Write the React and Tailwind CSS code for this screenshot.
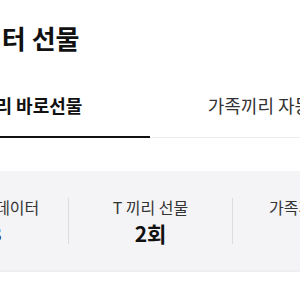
import React from 'react';

const stats = [
  { label: '선물가능 데이터', value: '0.3' },
  { label: 'T 끼리 선물', value: '2회' },
  { label: '가족끼리 선물', value: '1회' },
];

const App = () => {
  return (
    <div className="w-[300px] h-[300px] overflow-hidden bg-white font-['Noto_Sans_CJK_KR','Noto_Sans',sans-serif] text-[#111]">
      <div className="ml-[-46px] pt-[21px]">
        <h1 className="text-[26px] leading-[34px] font-bold whitespace-nowrap">데이터 선물</h1>
      </div>

      <div className="flex ml-[-100px] mt-[38px] w-[502px]">
        <div className="w-[250px] shrink-0 text-center pb-[18px] border-b-2 border-[#111]">
          <span className="text-[18px] leading-[24px] font-semibold whitespace-nowrap">T끼리 바로선물</span>
        </div>
        <div className="w-[252px] shrink-0 text-center pb-[19px] border-b border-[#ececec]">
          <span className="text-[18px] leading-[24px] text-[#333] whitespace-nowrap">가족끼리 자동선물</span>
        </div>
      </div>

      <div className="flex ml-[-96px] mt-[33px] w-[493px] bg-[#f4f4f6] border-b-2 border-[#efeff2]">
        {stats.map((s, i) => (
          <React.Fragment key={s.label}>
            {i > 0 && <div className="w-px h-[46px] self-center bg-[#dcdcdf] shrink-0" />}
            <div className={`${i === 1 ? 'w-[163px]' : 'w-[164px]'} shrink-0 flex flex-col items-center pt-[26px] pb-[23px]`}>
              <span className="text-[16px] leading-[20px] text-[#333] whitespace-nowrap">{s.label}</span>
              <span className="mt-[2px] text-[21px] leading-[28px] font-bold whitespace-nowrap">{s.value}</span>
            </div>
          </React.Fragment>
        ))}
      </div>
    </div>
  );
};

export default App;
